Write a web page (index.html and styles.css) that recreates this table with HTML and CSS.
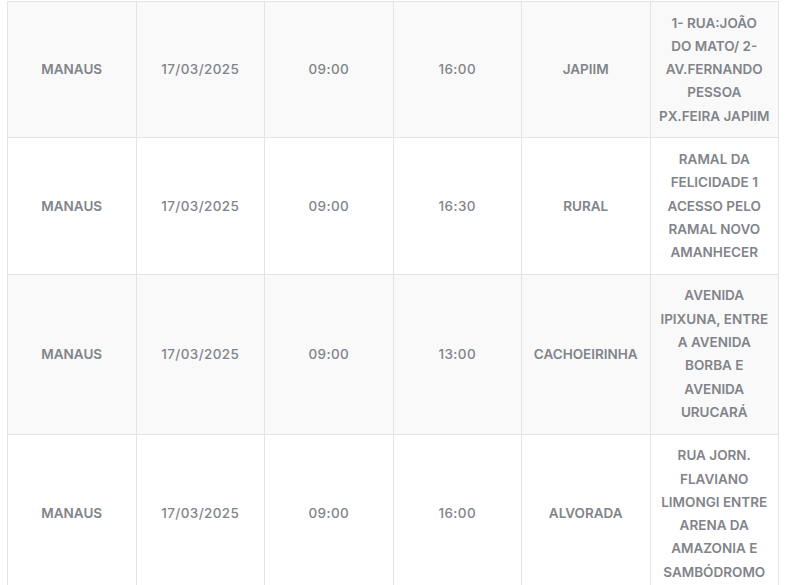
FILE: index.html
```html
<!DOCTYPE html>
<html lang="pt-BR">
<head>
<meta charset="utf-8">
<title>Agenda</title>
<link rel="stylesheet" href="styles.css">
</head>
<body>
<div class="wrap">
<table class="agenda">
<tbody>
<tr class="alt">
<td>MANAUS</td><td class="num">17/03/2025</td><td class="num">09:00</td><td class="num">16:00</td><td>JAPIIM</td>
<td>1- RUA:JOÃO<br>DO MATO/ 2-<br>AV.FERNANDO<br>PESSOA<br>PX.FEIRA JAPIIM</td>
</tr>
<tr>
<td>MANAUS</td><td class="num">17/03/2025</td><td class="num">09:00</td><td class="num">16:30</td><td>RURAL</td>
<td>RAMAL DA<br>FELICIDADE 1<br>ACESSO PELO<br>RAMAL NOVO<br>AMANHECER</td>
</tr>
<tr class="alt">
<td>MANAUS</td><td class="num">17/03/2025</td><td class="num">09:00</td><td class="num">13:00</td><td>CACHOEIRINHA</td>
<td>AVENIDA<br>IPIXUNA, ENTRE<br>A AVENIDA<br>BORBA E<br>AVENIDA<br>URUCARÁ</td>
</tr>
<tr>
<td>MANAUS</td><td class="num">17/03/2025</td><td class="num">09:00</td><td class="num">16:00</td><td>ALVORADA</td>
<td>RUA JORN.<br>FLAVIANO<br>LIMONGI ENTRE<br>ARENA DA<br>AMAZONIA E<br>SAMBÓDROMO</td>
</tr>
</tbody>
</table>
</div>
</body>
</html>
```
FILE: styles.css
```css
html, body {
  margin: 0;
  padding: 0;
  background: #ffffff;
}
.wrap {
  padding: 1px 0 0 7px;
}
.agenda {
  border-collapse: collapse;
  table-layout: fixed;
  width: 772px;
  font-family: "Inter", "Liberation Sans", sans-serif;
  font-size: 13.5px;
  font-weight: 600;
  color: #81848a;
  line-height: 23.3px;
}
.agenda td {
  border: 1px solid #e4e4e4;
  padding: 9.5px 8px;
  text-align: center;
  vertical-align: middle;
}
.agenda td.num {
  font-weight: 500;
  letter-spacing: 0.4px;
}
.agenda tr.alt td {
  background: #f9f9f9;
}
```
